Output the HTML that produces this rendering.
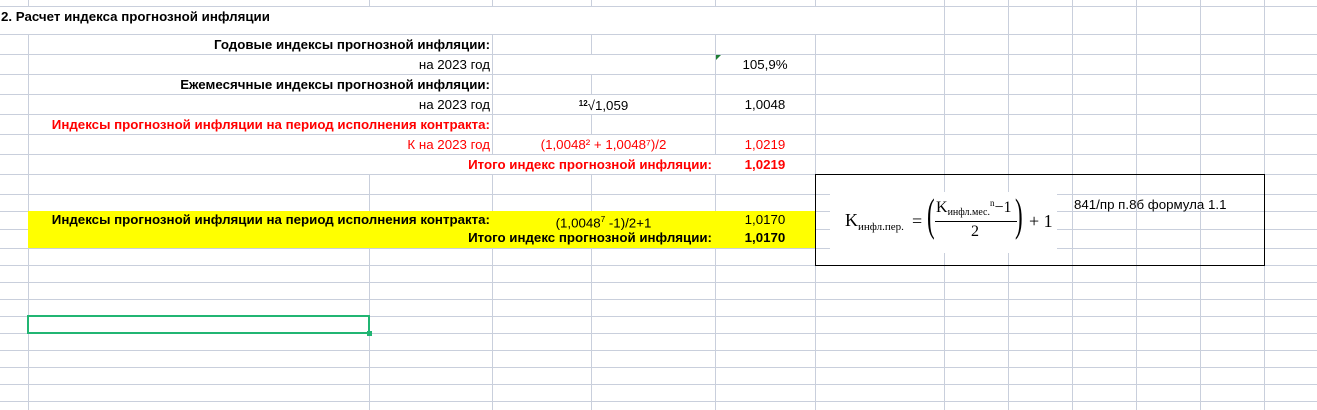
<!DOCTYPE html>
<html><head><meta charset="utf-8"><style>
body{margin:0;width:1317px;height:410px;position:relative;overflow:hidden;background:#fff;font-family:"Liberation Sans",Arial,sans-serif;font-size:13.3px;color:#000}
.h{position:absolute;left:0;width:1317px;height:1px;background:#c9cfdc}
.v{position:absolute;width:1px;background:#c9cfdc}
.t{position:absolute;white-space:nowrap;line-height:20px;height:20px}
.r{text-align:right}
.c{text-align:center}
.b{font-weight:bold}
.red{color:#f00}
.f{position:absolute;font-family:"Liberation Serif","DejaVu Serif",serif;white-space:nowrap;line-height:1}
</style></head><body>
<div class="h" style="top:6px"></div><div class="h" style="top:34px"></div><div class="h" style="top:54px"></div><div class="h" style="top:74px"></div><div class="h" style="top:94px"></div><div class="h" style="top:114px"></div><div class="h" style="top:134px"></div><div class="h" style="top:154px"></div><div class="h" style="top:174px"></div><div class="h" style="top:194px"></div><div class="h" style="top:211px"></div><div class="h" style="top:229px"></div><div class="h" style="top:248px"></div><div class="h" style="top:265px"></div><div class="h" style="top:282px"></div><div class="h" style="top:299px"></div><div class="h" style="top:316px"></div><div class="h" style="top:333px"></div><div class="h" style="top:350px"></div><div class="h" style="top:367px"></div><div class="h" style="top:384px"></div><div class="h" style="top:401px"></div>
<div class="v" style="left:28px;top:0;height:6px"></div><div class="v" style="left:28px;top:34px;height:376px"></div>
<div class="v" style="left:369px;top:0;height:6px"></div><div class="v" style="left:369px;top:174px;height:236px"></div>
<div class="v" style="left:492px;top:0;height:6px"></div><div class="v" style="left:492px;top:34px;height:120px"></div><div class="v" style="left:492px;top:174px;height:236px"></div>
<div class="v" style="left:591px;top:0;height:6px"></div><div class="v" style="left:591px;top:34px;height:20px"></div><div class="v" style="left:591px;top:74px;height:20px"></div><div class="v" style="left:591px;top:114px;height:20px"></div><div class="v" style="left:591px;top:174px;height:236px"></div>
<div class="v" style="left:715px;top:0;height:6px"></div><div class="v" style="left:715px;top:34px;height:120px"></div><div class="v" style="left:715px;top:174px;height:236px"></div>
<div class="v" style="left:815px;top:0;height:6px"></div><div class="v" style="left:815px;top:34px;height:376px"></div>
<div class="v" style="left:944px;top:0;height:410px"></div><div class="v" style="left:1008px;top:0;height:410px"></div><div class="v" style="left:1072px;top:0;height:410px"></div><div class="v" style="left:1136px;top:0;height:410px"></div><div class="v" style="left:1200px;top:0;height:410px"></div><div class="v" style="left:1264px;top:0;height:410px"></div>
<div style="position:absolute;left:28px;top:211px;width:787px;height:37px;background:#ffff00"></div>
<div style="position:absolute;left:27px;top:315px;width:339px;height:15px;border:2px solid #21b573"></div>
<div style="position:absolute;left:367px;top:331px;width:5px;height:5px;background:#21b573"></div>
<div style="position:absolute;left:716px;top:55px;width:0;height:0;border-top:5px solid #1e7e34;border-right:5px solid transparent"></div>
<div style="position:absolute;left:815px;top:174px;width:448px;height:90px;border:1px solid #000"></div>
<div style="position:absolute;left:830px;top:192px;width:227px;height:61px;background:#fff"></div>

<div class="t b" style="left:1px;top:6px;line-height:22px">2. Расчет индекса прогнозной инфляции</div>
<div class="t r b" style="left:28px;width:462px;top:35px">Годовые индексы прогнозной инфляции:</div>
<div class="t r" style="left:28px;width:462px;top:55px">на 2023 год</div>
<div class="t c" style="left:715px;width:100px;top:55px">105,9%</div>
<div class="t r b" style="left:28px;width:462px;top:75px">Ежемесячные индексы прогнозной инфляции:</div>
<div class="t r" style="left:28px;width:462px;top:95px">на 2023 год</div>
<div class="t c" style="left:492px;width:223px;top:94px"><span style="font-size:8px;font-weight:bold;vertical-align:4px">12</span>√1,059</div>
<div class="t c" style="left:715px;width:100px;top:95px">1,0048</div>
<div class="t r b red" style="left:28px;width:462px;top:115px">Индексы прогнозной инфляции на период исполнения контракта:</div>
<div class="t r red" style="left:28px;width:462px;top:135px">К на 2023 год</div>
<div class="t c red" style="left:492px;width:223px;top:135px">(1,0048² + 1,0048⁷)/2</div>
<div class="t c red" style="left:715px;width:100px;top:135px">1,0219</div>
<div class="t r b red" style="left:369px;width:343px;top:155px">Итого индекс прогнозной инфляции:</div>
<div class="t c b red" style="left:715px;width:100px;top:155px">1,0219</div>
<div class="t r b" style="left:28px;width:462px;top:210px">Индексы прогнозной инфляции на период исполнения контракта:</div>
<div class="t c" style="left:492px;width:223px;top:210px">(1,0048<sup style="font-size:8px">7</sup> -1)/2+1</div>
<div class="t c" style="left:715px;width:100px;top:210px">1,0170</div>
<div class="t r b" style="left:369px;width:343px;top:228px">Итого индекс прогнозной инфляции:</div>
<div class="t c b" style="left:715px;width:100px;top:228px">1,0170</div>
<div class="t" style="left:1074px;top:195px;font-size:13.3px">841/пр п.8б формула 1.1</div>

<div class="f" style="left:845px;top:211px;font-size:18px">K<span style="font-size:11px;vertical-align:-4px">инфл.пер.</span></div>
<div class="f" style="left:912px;top:212px;font-size:18px">=</div>
<div class="f" style="left:927px;top:192px;font-size:46px;transform:scaleX(0.5);transform-origin:left">(</div>
<div class="f" style="left:936px;top:199px;font-size:16px">K<span style="font-size:10px;vertical-align:-3px">инфл.мес.</span><span style="font-size:9px;vertical-align:6px">n</span>−1</div>
<div style="position:absolute;left:935px;top:221px;width:82px;height:1px;background:#000"></div>
<div class="f" style="left:971px;top:224px;font-size:16px">2</div>
<div class="f" style="left:1015px;top:192px;font-size:46px;transform:scaleX(0.5);transform-origin:left">)</div>
<div class="f" style="left:1029px;top:212px;font-size:18px">+ 1</div>
</body></html>
